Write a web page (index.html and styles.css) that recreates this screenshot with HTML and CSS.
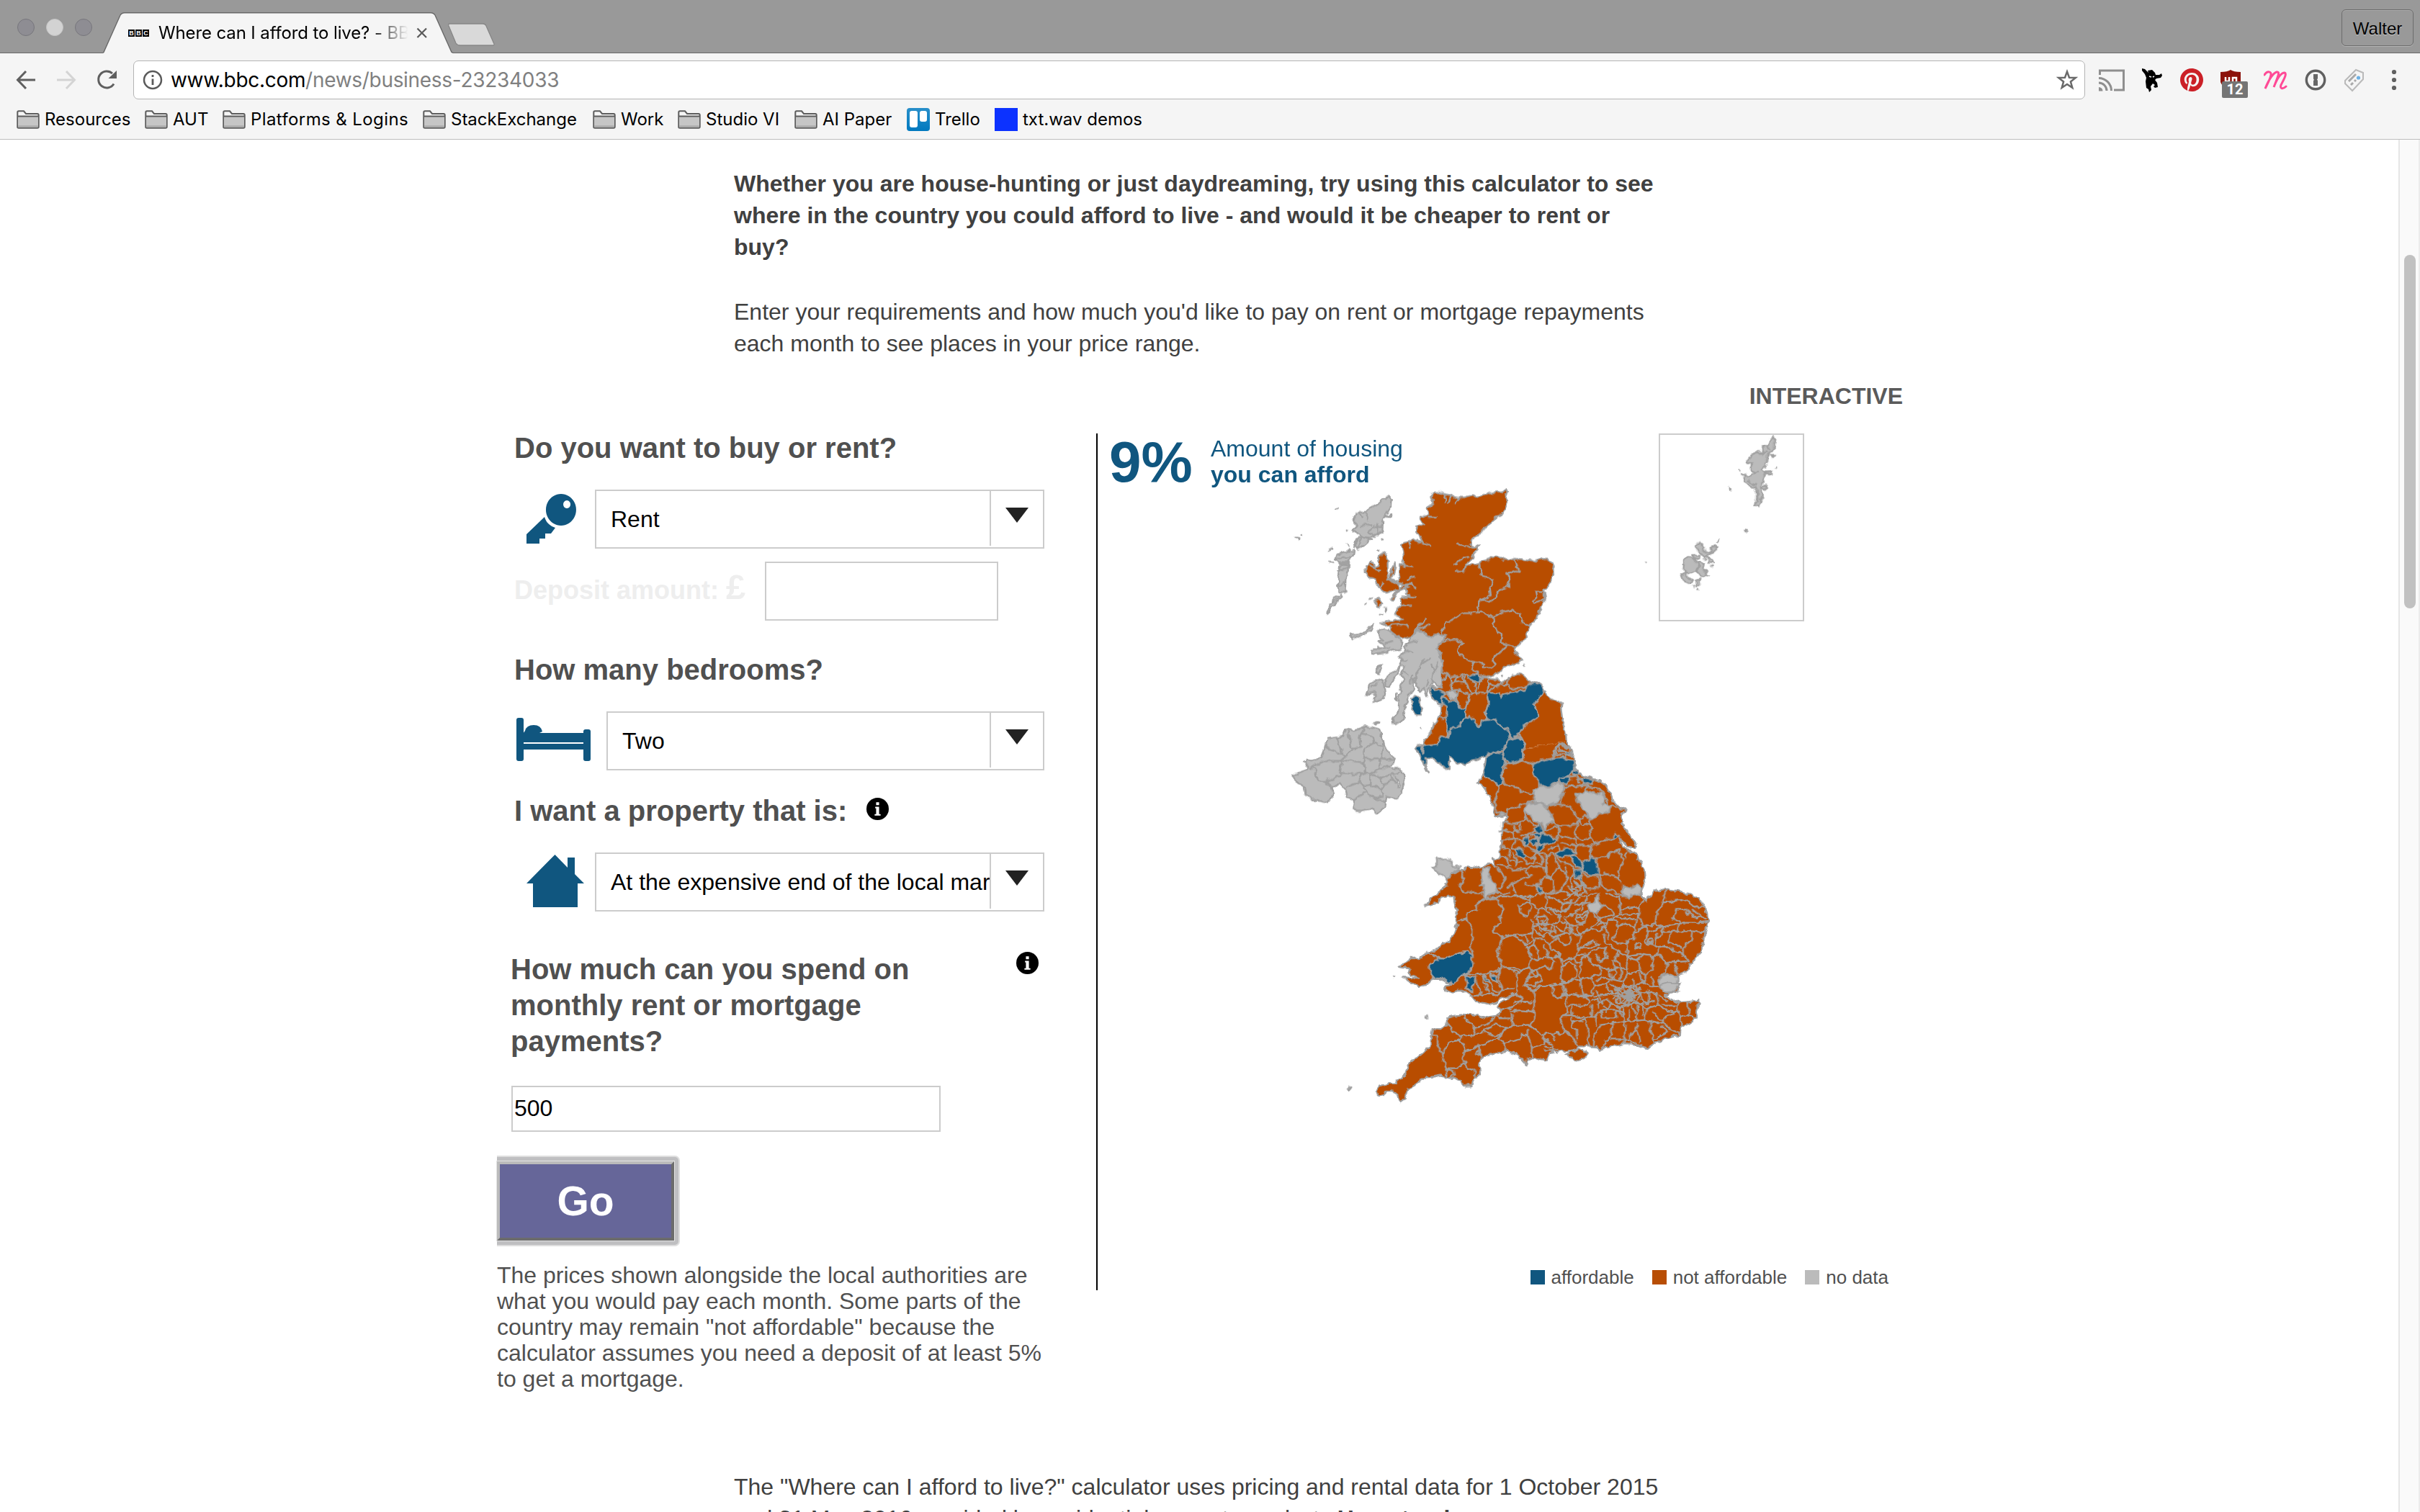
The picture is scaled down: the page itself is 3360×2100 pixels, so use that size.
FILE: index.html
```html
<!DOCTYPE html>
<html lang="en">
<head>
<meta charset="utf-8">
<title>Where can I afford to live? - BBC News</title>
<link rel="stylesheet" href="styles.css">
</head>
<body>
<header class="browser">
  <div class="tabstrip">
    <div class="lights"><i></i><i class="mid"></i><i></i></div>
    <div class="tab">
      <svg class="tab-shape" width="486" height="57" viewBox="0 0 486 57"><path d="M0 57 L1 55.5 L24 4 Q26 .7 30 .7 H455 Q459 .7 461 4 L484 55.5 L486 57Z" fill="#f5f5f5"/><path d="M0 56.2 L1 55.5 L24 4 Q26 .7 30 .7 H455 Q459 .7 461 4 L484 55.5 L486 56.2" fill="none" stroke="#686868" stroke-width="1.4"/></svg>
      <span class="favicon"><b>B</b><b>B</b><b>C</b></span>
      <span class="tab-title">Where can I afford to live? - BB</span>
      <svg class="close" width="16" height="16" viewBox="0 0 16 16"><path d="M1.5 1.5 14 14M14 1.5 1.5 14" stroke="#5a5a5a" stroke-width="2.2"/></svg>
    </div>
    <svg class="newtab" width="68" height="32" viewBox="0 0 68 32"><path d="M3 1H49Q53 1 54 4L65 29Q66 31 62 31H18Q14 31 12 28L2 4Q1 1 3 1Z" fill="#d9d9d9" stroke="#868686" stroke-width="1.3"/></svg>
    <span class="profile">Walter</span>
  </div>
  <div class="toolbar">
    <svg class="nav" width="145" height="32" viewBox="0 0 145 32" fill="none" stroke-width="3">
      <path d="M27 16H3M14 4 2.500 16 14 28" stroke="#5f5f5f"/>
      <path d="M57 16H81M70 4 81.500 16 70 28" stroke="#d4d4d4"/>
      <path d="M136 21.500A11.500 11.500 0 1 1 134 7" stroke="#5f5f5f"/>
      <path d="M140 3V14H128.500Z" fill="#5f5f5f"/>
    </svg>
    <div class="omnibox">
      <svg width="28" height="28" viewBox="0 0 28 28"><circle cx="14" cy="14" r="12" fill="none" stroke="#5a5a5a" stroke-width="2.500"/><path d="M14 12.500V21M14 7V10" stroke="#5a5a5a" stroke-width="2.800"/></svg>
      <span class="url">www.bbc.com<em>/news/business-23234033</em></span>
      <svg class="star" width="30" height="30" viewBox="0 0 30 30"><path d="M15 3.500 18 11.700 26.800 12 19.900 17.400 22.300 25.800 15 21 7.700 25.800 10.100 17.400 3.200 12 12 11.700Z" fill="none" stroke="#6a6a6a" stroke-width="2.500"/></svg>
    </div>
    <div class="extensions">
      <svg width="36" height="31" viewBox="0 0 36 31" fill="none" stroke="#8f8f8f" stroke-width="3"><path d="M1.500 8V2H34.500V29H21M0 12.500A17.500 17.500 0 0 1 17.500 30M0 19A11 11 0 0 1 11 30"/><path d="M0 25A5.500 5.500 0 0 1 5.500 30.500H0Z" fill="#8f8f8f" stroke="none"/></svg>
      <svg width="29" height="33" viewBox="0 0 29 33"><path d="M0 0 4 1 9 6 8 3 14 2 18 6 19 9 24 9 27 7 28 10 26 13 20 14 18 16 21 20 22 26 18 27 16 25 18 23 15 21 12 25 13 30 10 33 9 29 6 27 5 18 6 13 4 8 0 3Z"/><path d="M10 11 13 12M15 12 17 11" stroke="#f5f5f5" stroke-width="1.500"/></svg>
      <svg width="32" height="32" viewBox="0 0 24 24"><path fill="#cb2027" d="M12 0C5.373 0 0 5.372 0 12c0 5.084 3.163 9.426 7.627 11.174-.105-.949-.2-2.405.042-3.441.218-.937 1.407-5.965 1.407-5.965s-.359-.719-.359-1.782c0-1.668.967-2.914 2.171-2.914 1.023 0 1.518.769 1.518 1.690 0 1.029-.655 2.568-.994 3.995-.283 1.194.599 2.169 1.777 2.169 2.133 0 3.772-2.249 3.772-5.495 0-2.873-2.064-4.882-5.012-4.882-3.414 0-5.418 2.561-5.418 5.207 0 1.031.397 2.138.893 2.738.098.119.112.224.083.345l-.333 1.360c-.053.220-.174.267-.402.161-1.499-.698-2.436-2.889-2.436-4.649 0-3.785 2.750-7.262 7.929-7.262 4.163 0 7.398 2.967 7.398 6.931 0 4.136-2.607 7.464-6.227 7.464-1.216 0-2.359-.631-2.750-1.378l-.748 2.853c-.271 1.043-1.002 2.350-1.492 3.146C9.570 23.812 10.763 24 12 24c6.627 0 12-5.373 12-12 0-6.628-5.373-12-12-12z"/></svg>
      <span class="shield"><svg width="28" height="28" viewBox="0 0 28 28"><path d="M0 3Q10 3 14 0 18 3 28 3V17Q26 24 14 28 2 24 0 17Z" fill="#8c120b"/><path d="M7 10V16H12V10M17 18V11H22V16" fill="none" stroke="#fff" stroke-width="2.500"/></svg><b>12</b></span>
      <svg width="33" height="27" viewBox="0 0 33 27"><path d="M1 6C5 0 11 1 10 6 9 12 5 19 2 25 7 13 12 4 18 2 23 1 20 8 14 23 19 10 24 3 29 3 33 4 27 14 24 20 22 26 27 26 31 22" fill="none" stroke="#ff4a96" stroke-width="3" stroke-linecap="round"/></svg>
      <svg width="30" height="30" viewBox="0 0 30 30"><circle cx="15" cy="15" r="12.700" fill="none" stroke="#606060" stroke-width="3.400"/><path d="M12 7H18V13L17 14.500 18 16V23H12V16L13 15 12 13.500Z" fill="#666"/></svg>
      <svg width="29" height="33" viewBox="0 0 29 33"><path d="M17 2 27 6 27 15 12 31 2 21V17Z" fill="#f5f5f5" stroke="#b9b9b9" stroke-width="2"/><path d="M7 18 17 8M10 23 13 20M15 18 17 16" stroke="#a9a9a9" stroke-width="3"/><circle cx="20.500" cy="13" r="2.600" fill="#6db1e4"/></svg>
      <svg class="dots" width="8" height="30" viewBox="0 0 8 30" fill="#606060"><circle cx="4" cy="4" r="3.100"/><circle cx="4" cy="15" r="3.100"/><circle cx="4" cy="26" r="3.100"/></svg>
    </div>
  </div>
  <svg width="0" height="0" class="defs"><symbol id="folder" viewBox="0 0 32 26"><path d="M1.300 24V3Q1.300 1.300 3 1.300H10L13 5H29Q30.700 5 30.700 7V23Q30.700 24.700 29 24.700H3Q1.300 24.700 1.300 24Z" fill="#f5f5f5" stroke="#5c5c5c" stroke-width="2"/><path d="M2.300 9H29.700V23.500H2.300Z" fill="#c6c6c6"/><path d="M2 8.500H30" stroke="#5c5c5c" stroke-width="2"/><path d="M2.300 22.500H29.700" stroke="#a5a5a5" stroke-width="2"/></symbol></svg>
  <nav class="bookmarks">
    <span><svg><use href="#folder"/></svg>Resources</span>
    <span><svg><use href="#folder"/></svg>AUT</span>
    <span class="wide"><svg><use href="#folder"/></svg>Platforms &amp; Logins</span>
    <span><svg><use href="#folder"/></svg>StackExchange</span>
    <span><svg><use href="#folder"/></svg>Work</span>
    <span><svg><use href="#folder"/></svg>Studio VI</span>
    <span><svg><use href="#folder"/></svg>AI Paper</span>
    <span><i class="trello"><b></b><b></b></i>Trello</span>
    <span><i class="blue"></i>txt.wav demos</span>
  </nav>
</header>
<div class="viewport">
<main>
  <section class="prose intro">
    <p><strong>Whether you are house-hunting or just daydreaming, try using this calculator to see<br>where in the country you could afford to live - and would it be cheaper to rent or<br>buy?</strong></p>
    <p>Enter your requirements and how much you'd like to pay on rent or mortgage repayments<br>each month to see places in your price range.</p>
  </section>
  <div class="kicker">INTERACTIVE</div>
  <section class="calculator">
    <form class="controls">
      <h2>Do you want to buy or rent?</h2>
      <div class="row">
        <svg class="key" width="72" height="70" viewBox="0 0 72 70" fill="#10567f"><path d="M48 0A21 22 0 1 1 47.900 0ZM56 9A5 5.500 0 1 0 56.100 9Z" fill-rule="evenodd"/><path d="M25 32Q28 43 40 47L34 55H26V62H18V69H0V56Z"/></svg>
        <div class="select"><span>Rent</span><i></i></div>
      </div>
      <div class="row deposit"><label>Deposit amount: <b>£</b></label><div class="box"></div></div>
      <h2 class="bedrooms">How many bedrooms?</h2>
      <div class="row">
        <svg class="bed" width="103" height="60" viewBox="0 0 103 60" fill="#10567f"><rect width="10" height="60" rx="3"/><rect x="93" y="16" width="10" height="44" rx="3"/><path d="M12 18Q14 10 24 10 34 10 36 19L32 21H93V34H9V22Z"/><path d="M9 36H93V44H9Z"/></svg>
        <div class="select"><span>Two</span><i></i></div>
      </div>
      <h2 class="property">I want a property that is: <svg class="info" viewBox="0 0 30 30"><circle cx="15" cy="15" r="15"/><path d="M12 12H17V22H19V24H11V22H13V14H11.500ZM13 6H17V10H13Z" fill="#fff"/></svg></h2>
      <div class="row">
        <svg class="house" width="80" height="73" viewBox="0 0 80 73" fill="#10567f"><path d="M39.500 0 57 18V4H67V27L80 40H71V73H9V40H0Z"/></svg>
        <div class="select"><span>At the expensive end of the local market</span><i></i></div>
      </div>
      <div class="spend"><h2>How much can you spend on<br>monthly rent or mortgage<br>payments?</h2><svg class="info" viewBox="0 0 30 30"><circle cx="15" cy="15" r="15"/><path d="M12 12H17V22H19V24H11V22H13V14H11.500ZM13 6H17V10H13Z" fill="#fff"/></svg></div>
      <div class="amount">500</div>
      <div class="go"><span>Go</span></div>
      <p class="note">The prices shown alongside the local authorities are<br>what you would pay each month. Some parts of the<br>country may remain "not affordable" because the<br>calculator assumes you need a deposit of at least 5%<br>to get a mortgage.</p>
    </form>
    <div class="results">
      <svg class="map" width="1120" height="1190" viewBox="1524 602 1120 1190">
        <defs>
          <filter id="rough" filterUnits="userSpaceOnUse" x="1524" y="602" width="1120" height="1190"><feTurbulence type="fractalNoise" baseFrequency=".11" numOctaves="2" seed="4"/><feDisplacementMap in="SourceGraphic" scale="8" xChannelSelector="R" yChannelSelector="G"/></filter>
        </defs>
        <path d="M2304 603H2504V862H2304Z" fill="none" stroke="#ccc" stroke-width="2"/>
        <g class="regions" filter="url(#rough)">
          <path class="no" stroke="none" d="M2075 1045H2178V1055H2170L2078 1062Z"/>
          <g transform="translate(1900 1130) scale(.33333)">
            <path class="no" d="M825 -300 828 -292 840 -270 848 -250 855 -220 862 -190 880 -170 900 -155 940 -145 965 -134 990 -115 1005 -90 1020 -50 1040 -28 1072 -12 1055 0 1050 15 1060 45 1080 80 1100 105 1115 130 1110 142 1085 138 1060 120 1045 105 1050 125 1075 145 1100 162 1120 175 1135 205 1152 240 1155 285 1140 310 1135 330 1140 350 1160 362 1185 330 1190 320 1240 315 1290 322 1340 335 1380 365 1405 390 1412 430 1415 460 1400 500 1392 545 1385 575 1360 605 1338 625 1335 650 1305 668 1285 672 1285 710 1300 705 1290 740 1265 748 1235 755 1255 770 1290 787 1330 784 1375 780 1370 800 1368 850 1330 875 1300 885 1295 920 1270 925 1240 935 1200 955 1170 975 1158 982 1140 970 1100 962 1060 960 1020 968 990 972 968 987 950 972 920 970 880 970 850 985 815 992 790 995 775 992 755 1000 750 1025 735 1030 700 1022 660 1018 658 1050 650 1030 625 1008 590 995 565 990 530 1000 500 1005 470 1020 462 1050 465 1085 440 1105 430 1135 400 1135 385 1115 350 1102 325 1100 300 1090 260 1098 220 1100 210 1122 180 1140 160 1150 155 1185 130 1203 120 1175 100 1155 75 1155 65 1170 40 1175 35 1160 45 1135 80 1125 110 1120 140 1100 160 1070 170 1035 200 1020 230 995 262 960 265 925 270 898 300 900 325 880 328 848 360 842 410 835 450 840 490 852 540 845 550 820 535 800 575 775 612 750 590 757 545 770 525 790 490 795 450 785 425 755 395 735 370 735 345 742 315 735 325 715 350 710 325 700 300 690 265 685 250 710 205 720 180 705 140 682 210 685 175 670 170 645 130 640 180 600 215 600 245 580 290 560 330 535 355 505 370 460 362 430 370 400 358 370 355 345 330 345 295 355 290 372 245 378 255 355 300 320 325 300 325 275 350 255 380 232 400 240 410 220 440 225 480 215 510 212 530 222 518 185 550 185 545 160 555 130 555 80 555 40 575 20 578 8 530 12 520 -30 500 -80 470 -120 460 -130 475 -160 485 -200 510 -240 525 -255"/>
          </g>
          <g transform="translate(1780 660) scale(.33333)">
            <path class="no" d="M885 1155 860 1160 830 1180 790 1188 760 1205 730 1195 700 1175 695 1228 660 1205 625 1175 600 1180 598 1205 610 1238 595 1210 575 1175 560 1135 585 1125 600 1095 625 1065 635 1030 660 1005 665 965 640 945 618 915 625 880 645 885 660 885 668 860 665 830 668 800 660 745 640 720 665 690 685 665 660 665 605 670 590 650 570 645 540 670 505 685 480 670 455 650 450 630 415 615 460 605 500 600 470 580 480 555 500 540 490 515 530 510 520 495 515 470 490 480 460 520 455 510 480 480 505 460 485 445 490 370 515 380 500 360 510 330 500 290 530 270 560 275 590 280 575 255 560 235 565 215 590 205 575 170 610 165 605 130 632 115 620 90 640 68 658 70 683 80 700 82 722 92 760 92 790 82 812 90 860 74 895 70 920 72 930 56 942 68 932 92 938 120 925 150 912 165 885 180 860 208 835 232 805 258 788 270 788 288 800 300 822 295 800 330 780 355 752 400 770 380 790 372 815 374 830 360 862 350 890 338 920 348 945 355 970 348 1000 350 1040 355 1080 352 1105 350 1122 362 1132 385 1134 410 1122 435 1105 460 1092 485 1098 515 1085 535 1072 560 1062 595 1045 615 1028 628 1025 655 1015 675 1000 695 980 712 968 722 968 740 990 752 1003 765 985 782 965 790 945 788 925 800 905 820 885 835 860 838 830 832 850 845 880 850 920 858 945 850 960 832 985 828 1010 840 1035 862 1060 868 1078 872 1090 895 1115 930 1140 940 1160 955 1165 990 1170 1030 1180 1070 1185 1110"/>
            <g class="no"><path d="M340 400 365 375 375 355 385 385 400 375 410 330 425 325 440 350 440 420 455 440 480 455 490 480 460 480 430 490 400 465 385 430 360 425ZM385 530 405 515 418 535 405 550ZM425 555 435 555 432 570ZM460 390 470 365 472 385 458 435 450 425Z"/></g>
            <path class="line" d="M683 80 676 112M700 85 690 115M738 92 720 118M610 175 645 178M560 275 600 285 617 298M530 270 532 300M735 290 760 298 800 300M775 340 745 350 720 372M720 402 752 402M500 375 542 380M520 435 550 422M505 460 540 455 556 472M515 470 540 450M500 505 555 508M500 540 535 542M460 605 505 600M450 625 490 622 525 632M540 670 570 630 598 595M570 640 590 628 618 628M400 470 420 450M370 380 410 400M440 430 530 470M470 500 490 480"/>
            <path class="line" d="M825 362 830 420 860 425 880 440 865 465 870 500 820 525 815 565M970 350 975 380 995 400 970 398 940 410 945 465 910 475 880 520 820 525M1092 490 1055 488 1060 510 1042 520 1055 530 1095 515M665 665 680 615 720 595 750 575 790 575 830 570 880 590 920 570 960 560 990 575 1000 610 1028 628M880 590 885 630 915 665 910 700 940 710 980 712M665 690 720 685 755 700 735 705 735 745 800 780 840 785 835 800 880 800 890 790 875 768 905 740 935 715M800 780 790 805 815 828M670 820 690 825 700 840 740 835 770 832M690 825 680 850 665 855M700 840 705 870 735 860 760 865 750 840M735 835 720 860M760 840 765 870 790 905 810 910 805 885 795 862M705 870 710 895 740 895 780 915 810 905 860 905 862 850M740 895 725 930 740 970M835 842 815 885M865 870 900 880 920 860M862 905 900 870 935 875 945 890 1035 880M930 870 950 850M780 915 765 970M660 1010 680 1010M890 1150 930 1140 985 1095M985 1070 990 1095M1125 1170 1140 1130 1165 1120 1190 1130M1150 1150 1195 1150"/>
            <g class="yes"><path d="M862 905 885 908 905 905 912 928 930 910 975 900 1010 895 1030 872 1060 868 1080 875 1090 895 1075 925 1048 955 1060 980 1068 1005 1045 1020 1010 1045 990 1070 965 1100 950 1085 945 1065 915 1045 890 1020 850 1018 848 985 860 950 855 925Z"/><path d="M585 1125 650 1120 655 1095 690 1090 710 1050 745 1045 750 1010 780 1003 800 1020 822 1050 835 1022 870 1018 890 1025 915 1045 945 1065 955 1105 925 1130 910 1150 885 1155 860 1160 830 1180 790 1188 760 1205 730 1195 700 1175 695 1228 660 1205 625 1175 600 1180 598 1205 610 1238 595 1210 575 1175 560 1135Z"/><path d="M672 925 700 940 730 945 740 970 765 970 760 1005 745 1045 710 1050 690 1085 688 1040 680 1010 690 985 690 965 660 945Z"/><path d="M625 878 645 895 680 910 665 930 668 960 640 942 618 915Z"/><path d="M540 930 560 920 575 935 578 965 585 975 578 998 560 998 545 980 538 950Z"/><path d="M770 832 815 828 835 842 815 868 800 862Z"/><path d="M915 1150 945 1105 985 1095 1010 1118 1000 1140 1000 1185 945 1200 925 1180Z"/><path d="M885 1155 915 1160 930 1185 920 1220 920 1290 900 1295 870 1268 835 1250 845 1210 850 1175Z"/></g>
            <g class="none"><path d="M582 1130 590 1152 584 1155Z" fill="#fff"/><path d="M685 905 715 897 730 915 722 938 700 925Z"/><path d="M540 670 570 650 595 650 605 670 680 665 665 695 640 720 660 745 668 800 665 830 670 855 660 882 640 870 625 855 615 885 600 918 590 885 575 900 560 865 545 850 545 870 550 890 525 915 520 950 510 985 505 1020 490 1035 465 1035 465 1010 480 990 485 940 495 905 490 890 505 850 495 830 510 800 490 790 500 765 485 760 510 730 510 715 530 695Z"/><path d="M400 650 430 640 450 650 475 670 505 700 495 725 460 730 440 740 400 745 375 740 375 725 410 725 430 710 400 690 420 685 400 670Z"/><path d="M350 915 365 870 380 860 420 850 425 880 430 920 415 935 380 945 395 920 385 905 360 910Z"/><path d="M430 850 490 795 485 820 445 885 430 880ZM285 665 310 665 345 650 380 620 370 645 330 670 300 680 290 685ZM400 800 418 790 405 825 395 820ZM475 915 482 912 478 940 473 935Z"/><path d="M300 180 310 160 345 150 370 135 405 115 445 88 455 100 453 130 435 165 420 190 418 235 400 250 365 260 340 258 315 245 295 225 310 210 300 195ZM310 265 335 258 370 270 345 290 320 305 300 290ZM230 330 260 322 300 310 295 340 275 360 275 400 265 440 262 490 235 485 235 430 245 370 225 345ZM215 510 245 495 250 510 220 535 200 560 190 578 185 570 205 535ZM432 175 456 163 450 178ZM360 512 380 514M380 1032 400 1032 392 1040ZM58 260 70 262 66 268ZM222 138 234 140M80 246 84 248M198 360 215 362M198 312 205 308M272 230 274 232M400 310 403 312M415 266 420 268M346 536 349 536M410 578 416 580M575 1055 577 1057M1008 792 1010 794M912 835 914 837M1160 960 1165 953M272 290 278 296M275 315 285 305"/>
            <path d="M540 830 535 870M590 770 560 830 550 860M620 760 580 790M650 780 630 820 625 850M625 790 630 815M530 700 560 690M510 735 540 740M495 770 520 770M500 820 520 830M600 880 610 850M430 700 460 690M360 190 350 155M335 175 325 155M330 210 370 205M385 210 360 235 375 250M400 205 400 245M415 210 385 215M240 365 280 365M235 400 270 385M240 455 262 450M235 345 290 345M330 265 320 300M400 720 450 722M375 880 395 870M250 370 280 375M300 300 320 260M210 530 235 510"/>
            <path d="M40 1252 100 1228 110 1215 90 1195 100 1185 120 1192 160 1180 180 1130 190 1095 225 1090 255 1090 265 1055 300 1062 340 1048 375 1050 410 1060 420 1090 430 1130 450 1160 470 1180 465 1200 440 1210 460 1222 490 1222 505 1250 510 1285 495 1325 475 1348 435 1340 430 1380 400 1408 370 1390 330 1398 295 1395 300 1355 270 1340 262 1310 240 1285 205 1305 213 1330 190 1365 140 1355 95 1330 90 1300 60 1275Z"/><path d="M180 1130 220 1145 240 1165 265 1170 245 1190 170 1190 120 1220 140 1225 150 1275 185 1275 240 1250 250 1190 340 1200 345 1240 300 1245 240 1240M185 1275 205 1305M230 1095 240 1130 250 1165M275 1065 290 1140 265 1170M290 1140 330 1135 325 1100 340 1050M330 1075 380 1090 385 1115 345 1135 340 1200M385 1115 415 1130M340 1180 405 1180 470 1185M405 1180 410 1225 370 1245 345 1240M370 1245 370 1290 340 1295 320 1270 330 1245M410 1225 440 1215M370 1245 410 1260 425 1290 415 1310 370 1290M410 1260 450 1250M425 1290 465 1270 450 1250 490 1240M340 1295 350 1320 300 1355M350 1320 380 1345 420 1340 415 1310M270 1300 320 1280M380 1345 430 1360M410 1080 425 1110 415 1180M465 1270 475 1280" fill="none"/><path d="M472 1255 492 1275 490 1300 482 1300 482 1275Z" fill="#fff"/></g>
          </g>
          <g transform="translate(1900 900) scale(.33333)">
            <path class="line" d="M570 480 600 480 640 468 685 485 690 530 710 555 710 590 685 605 640 600 600 575 570 570 560 545 555 520 570 500ZM595 380 630 365 640 390 655 405 640 440 645 465M540 575 540 600 528 625 525 660 545 690M685 640 640 650 610 665 580 668 578 700M560 725 600 735 640 725 655 700 645 675M765 462 775 440 790 400 820 410 842 415M790 400 800 425 825 430M775 440 820 445 850 445M820 450 830 475 850 478M850 470 860 530M840 540 870 535 885 545M840 570 870 575 895 565M905 595 915 575 980 600 1000 660 1070 672M815 580 860 575 915 572M745 660 790 650 840 660 860 690 875 715 870 735 830 740 790 740 770 730M815 605 800 645M875 715 900 700 925 712 920 740 890 735ZM925 715 925 790 895 800 865 790 860 760 875 740M790 740 795 780 780 800M795 780 860 798 870 822 930 820M925 790 940 822 990 800 1020 795M805 810 865 825 862 855M735 760 775 745 790 752M560 760 600 770 630 760 632 730M555 800 600 795 640 800 648 830M600 770 610 800 600 830 635 838M635 775 665 780 690 762M655 705 690 735 708 740M565 800 560 830 590 840 585 870M660 825 680 840 700 850 690 875 665 870M640 870 660 900 690 895 690 875M700 850 740 860 745 900M600 860 620 880 610 910M570 870 590 905 570 915M715 855 730 880 720 905 700 890M590 880 640 895M750 840 790 820 800 840M740 870 765 855 790 900 780 930 760 955 740 940ZM780 865 800 890 840 900 862 925M930 820 920 870M950 880 990 865 1040 840 1055 860 1060 900 1040 930 1050 980M955 940 1000 945 1045 960M970 945 970 990 1000 1005 1060 1035M1000 870 1010 850 1050 840M1075 845 1070 870M890 940 910 950 960 950 965 1000 910 1005 890 975M862 940 840 960 850 1000M820 910 830 960 800 1010M790 910 820 940M985 935 1000 940M540 905 600 925 660 920 680 910 735 915 740 940M550 930 575 960 545 1000M515 905 550 930M600 980 650 960 675 950 660 925M575 1000 600 980 610 1025M650 980 700 995 735 950 775 965 775 1010 740 1025M385 935 400 960 380 985 400 1015 475 1020M350 940 390 930M540 1020 560 1025 590 1015M485 1045 530 1040M860 970 880 1000 870 1030M890 980 905 1020M545 765 575 755M610 740 620 765M555 870 580 880"/>
            <g class="yes"><path d="M685 485 715 470 760 462 800 455 850 470 860 495 835 535 795 540 790 560 750 578 715 575 710 555 690 530ZM795 540 835 540 830 567 800 565ZM850 515 865 503 880 525 855 530ZM885 540 938 550 935 567 895 565ZM820 430 846 432 840 440 825 440ZM868 545 878 545 875 560ZM688 755 710 736 730 768 700 772ZM645 792 667 783 672 815 655 830ZM713 773 745 776 784 802 750 820 713 812ZM678 780 712 771 714 790 690 792ZM673 802 705 793 712 812 685 822ZM698 823 737 816 727 837 710 852 700 842ZM616 836 640 843 662 868 640 875 618 862ZM776 858 820 838 852 840 864 855 825 867 795 868ZM838 863 860 866 890 890 882 920 862 908ZM892 895 920 885 925 870 952 876 954 910 960 942 930 944 888 930ZM860 923 884 923 880 962 865 952ZM873 960 890 953 890 977ZM701 986 715 1000 724 1022 705 1017ZM1012 797 1030 768 1044 787Z"/></g>
            <g class="none"><path d="M690 595 715 582 750 578 790 562 815 575 810 605 790 640 745 660 720 648 685 640ZM645 675 660 652 710 645 740 660 760 690 770 725 745 735 735 760 720 738 690 715 660 690ZM865 610 890 610 905 595 945 605 975 605 985 630 980 650 1012 660 1000 685 960 690 935 715 915 708 905 675 880 655 870 630ZM265 912 285 910 285 880 325 878 345 892 350 912 385 912 350 940 328 965 300 945ZM478 912 500 920 500 950 530 985 540 1020 500 1030 485 1045 475 1030 485 990 465 990 478 965 472 935ZM1058 990 1090 1000 1120 985 1135 1005 1130 1025 1100 1028 1085 1045 1060 1030ZM955 1025 960 1055 975 1070 965 1090 945 1105 915 1095 912 1070 940 1060ZM542 688 572 690 560 700 542 700ZM280 878 284 880M240 1070 242 1074"/></g>
          </g>
          <g transform="translate(1900 1130) scale(.33333)">
            <path class="no" d="M820 1005 845 990 880 980 912 1000 890 1025 872 1032 850 1015Z"/>
            <path class="line" d="M535 345 505 350 485 355 455 375 455 400 410 412 412 440 430 475 430 520 425 560 435 590M372 450 408 440M250 575 270 590 290 602M535 345 540 375 560 400 545 430 555 455 520 485 545 505 560 515 545 545 540 590 555 640 530 660 500 665 450 670 415 668M560 515 590 505 625 520 665 550 675 600 665 640 640 655 600 640 555 640M545 645 545 700 560 735M580 645 618 660 615 745M450 680 455 720 470 735 460 760M480 670 475 700 500 740M505 705 520 740 545 740M540 660 530 700 548 722M440 760 500 750 540 755 560 735 600 730M250 640 290 612M385 680 350 710M590 505 680 500 690 460 680 440M620 385 665 370 675 395 662 432 640 415ZM580 345 640 345 670 362M535 345 580 345"/>
            <path class="line" d="M265 925 285 925 285 960 305 995 310 1030 325 1065 325 1095M330 880 350 905 385 930 380 945 340 955 320 980 310 1000M380 945 400 960 400 990 395 1020 410 1040 370 1060 325 1062M400 990 440 980 460 965M400 1040 410 1060 440 1070 445 1100M460 965 470 1020M455 990 466 985 462 1002 450 998ZM380 930 440 925 480 905M440 925 445 895 400 855 400 840M440 895 490 880 540 845M480 905 500 890 530 880 575 892 555 920 520 925 480 905M465 965 540 935 570 960 565 990M540 935 570 892 600 885 670 880 690 900M595 830 600 885M545 850 590 850M590 820 640 820 690 825M610 790 630 780 680 785M550 820 620 800 640 770 610 750M570 955 630 940 640 920 665 925M325 1065 350 1070 355 1090 340 1102M690 740 690 860 675 885 725 920 800 915 815 910 800 850 830 830 825 790 820 750 800 765 770 760 765 715 720 720 690 740M665 900 665 925 680 975 680 1015M725 920 730 960 680 975M725 940 770 960 770 990 735 985M760 920 775 940M735 970 790 985"/>
            <path class="line" d="M820 910 850 930 870 965M845 850 845 890 870 900 870 940M850 800 845 840 815 840M820 750 900 760 920 775 915 800 835 800M845 842 925 850 930 800M905 855 915 900 910 945 920 968M935 965 940 920 970 880 1020 875M945 845 945 885M845 870 905 855M1020 880 1010 930 985 945 975 980M1010 940 1070 940 1140 965M1070 870 1065 960M970 880 1065 868 1150 860 1200 870 1225 870M1115 880 1130 950M1080 940 1090 920 1115 900M1170 870 1180 920 1190 955M1190 940 1250 910 1220 885M1225 870 1260 900 1295 915M1150 860 1160 810 1210 800 1240 820 1290 830 1290 785M1210 800 1200 755M1290 830 1300 850 1300 885M1300 850 1330 840 1365 855M1330 785 1335 840M1225 870 1235 850 1290 825M1185 830 1225 860M1120 800 1120 860M970 820 1030 820 1065 830 1065 865M970 820 975 850 1030 850 1030 820M1040 800 1050 840M1085 820 1085 860M1140 790 1145 840M930 850 975 820M1210 755 1245 780M1230 800 1290 800"/>
            <path class="line" d="M885 690 930 680 940 720 930 760 895 755 885 720ZM810 705 880 690M810 705 820 745M805 635 840 620 865 635 865 680 825 705 800 690ZM775 600 800 590 810 635M690 735 700 720 760 715 810 705M618 665 670 640 680 660 660 690 650 715 690 740M660 690 710 670 725 690 690 715 650 715M680 655 700 650 708 665 690 672ZM705 650 730 630 760 650 770 620M675 600 710 610 740 600 775 600M665 555 680 590M710 610 705 570 690 550 700 520M730 550 745 590 775 615M700 520 730 520 750 545M755 545 760 570 800 590 815 615 860 600 870 570 885 555M755 545 780 520M885 555 940 530 955 545 930 560ZM880 510 920 480 960 490 985 470M860 470 885 510 870 570M780 510 820 550 845 530 840 510M820 480 845 480 840 500 815 500ZM870 590 910 590 960 560 985 560M910 590 930 625 970 640 960 670M885 620 880 690M860 600 870 625 910 590M980 500 985 540 1010 550 1040 575M1020 520 1045 470 1070 455 1110 480 1105 520 1070 540 1040 545ZM985 470 1000 440 1035 450 1045 475M950 590 960 620 1000 600 985 570M1040 575 1030 610 1060 640M985 560 985 600M1075 530 1080 600M1080 600 1120 610 1135 660 1080 670 1075 640ZM1115 540 1135 545 1130 565 1115 560ZM1110 500 1150 465 1165 500 1150 530 1190 555M1165 495 1225 475 1225 500 1200 520M1165 520 1180 520 1178 540 1165 530ZM1040 575 1080 595 1150 585 1180 590 1185 650 1150 670 1130 660M1120 605 1150 585M1180 590 1215 590 1245 625 1240 655 1210 680M1190 555 1230 550 1300 580 1335 610M1215 560 1200 585M1215 590 1250 620 1335 615M1275 625 1285 665M1190 555 1200 500"/>
            <path class="line" d="M1195 460 1200 410 1225 380 1230 345 1240 320M1230 370 1300 360 1340 370 1370 395 1395 380M1280 400 1330 400 1360 430 1400 435M1280 400 1270 435 1295 450 1290 490M1320 410 1335 410 1335 422 1318 418ZM1130 390 1130 430 1140 460 1195 465 1225 475 1290 460M1045 345 1050 400 1130 390 1145 360M1260 490 1250 540 1300 560M1225 490 1350 490 1400 500M1350 490 1340 530 1310 560 1310 590M1295 455 1370 455 1410 450M1350 400 1400 440M975 380 1010 400 1020 420 960 440 950 410M1010 440 1050 420 1125 420M1020 430 1110 445M960 440 990 480 1000 520M990 450 960 465M860 380 920 370M910 410 905 450 880 460 860 440 870 420ZM820 430 860 420 880 390M815 440 850 470 890 460M930 415 960 450 930 480M1050 420 1045 350 990 330M1110 480 1120 440 1125 420M720 330 760 335 800 320 830 340M680 345 730 330 750 360 740 400 700 395 670 370ZM750 345 810 375 805 410 750 390M830 340 860 330 880 350M700 430 730 425 750 440 740 460 710 455ZM730 460 770 470 780 500M720 470 740 490 780 490M760 400 790 420 800 450 770 460M790 430 800 420 805 435ZM800 450 860 470M690 490 720 510 750 500 770 515 815 500M680 500 690 530 660 540M650 505 660 530M850 300 870 320 860 340M880 280 900 320 880 340M860 330 900 345 945 330M830 300 850 330 820 360M865 290 895 300M810 375 860 370 880 350M740 400 760 420M690 430 710 400M885 420 895 440M870 435 905 425M700 460 740 480M690 475 740 440M740 470 750 440M760 500 760 470M830 450 820 480M650 345 680 345M890 280 910 310M700 440 720 490M720 440 740 470M780 470 810 490M840 470 850 500 880 510M840 320 880 300M850 360 830 400 800 405M905 350 890 400M660 560 690 550"/>
            <path class="line" d="M940 720 990 710 1010 690 1000 650 970 640M1010 690 1060 700 1080 670M1060 640 1050 690M1020 610 1030 660 1010 690M940 760 990 755 1030 745 1050 755M960 790 990 770 1010 790 1040 810 1075 800 1120 790 1160 810M990 710 1000 740 1030 745M1060 700 1070 720 1110 715 1140 700 1130 670M1140 700 1180 720 1210 715M1110 715 1130 750 1160 740 1200 755M1150 670 1160 700 1140 700M930 780 955 770 960 810M1000 690 970 680 950 700M1040 730 1010 710M1130 750 1150 790 1190 780M1030 640 1075 650M1000 655 1040 640M950 740 975 790M1170 740 1165 790M980 800 1000 820M1010 790 990 830M1100 690 1105 720M960 670 930 680M1180 680 1185 720M1095 800 1110 830M1060 810 1060 840"/>
            <path class="line" d="M1040 735 1060 720 1090 722 1120 735 1130 760 1115 785 1085 798 1055 790 1038 765ZM1055 745 1080 735 1105 745 1110 765 1090 780 1065 772ZM1040 735 1110 765M1060 720 1095 782M1090 722 1070 790M1120 735 1055 770M1038 765 1125 755M1065 745 1090 760 1075 770 1100 775 1085 745M1070 755 1105 750M1085 798 1090 720M1055 790 1075 740M1038 750 1110 785M1080 735 1080 780M1025 755 1040 765 1030 785 1055 790M1025 730 1040 735M1020 770 1038 765M1115 785 1140 790M1120 735 1135 725"/>
            <g class="yes"><path d="M285 600 330 602 380 580 410 575 435 595 430 640 415 668 385 680 355 710 325 700 300 685 265 682 250 650 250 630 290 612ZM400 672 425 680 448 680 445 710 430 722 430 745 405 725 410 700ZM478 668 490 678 507 707 490 702ZM506 670 530 678 537 700 518 694Z"/></g>
            <g class="none"><path d="M1215 680 1240 665 1285 685 1285 705 1300 708 1270 745 1225 740 1210 715ZM1215 715 1250 705 1300 708M243 840 247 852M103 679 105 681M-88 1147 -80 1138 -74 1140 -80 1150Z"/></g>
          </g>
          <g class="none" transform="translate(2280 580) scale(.33333)"><path d="M530 90 542 83 556 90 550 125 545 135 525 150 522 185 510 205 500 215 515 240 500 265 497 290 500 330 485 375 468 370 475 330 470 290 450 285 422 265 422 240 445 245 470 235 455 215 455 190 432 190 445 172 460 155 480 145 505 145 505 118 522 118 528 130ZM532 155 555 155 545 165ZM510 225 540 222 540 235 515 232ZM500 290 515 275 522 290 512 302ZM490 335 503 335M415 235 428 240M555 210 562 207M404 223 406 224M365 290 372 295 366 300ZM431 472 437 466 434 478ZM12 597 14 598M445 265 470 280M460 240 480 225M480 300 480 350M508 150 520 140"/><path d="M175 590 195 580 220 595 235 615 225 640 195 652 172 635ZM162 655 180 648 190 665 212 675 205 692 182 692ZM210 573 240 572 238 590 215 588ZM220 532 245 518 245 540 265 560 285 555 295 535 320 545 290 560 275 570 262 588 250 570 228 548ZM272 580 295 590 298 605 275 605ZM235 605 255 605 250 625 270 640 270 655 250 665 230 645 235 625ZM225 675 240 670 240 705 228 708ZM312 520 320 512M235 719 238 722M214 705 217 700M292 618 293 620M270 657 276 660"/></g>
        </g>
      </svg>
      <div class="headline"><strong>9%</strong><span>Amount of housing<br><b>you can afford</b></span></div>
      <div class="legend"><span><i class="c-yes"></i>affordable</span><span><i class="c-no"></i>not affordable</span><span><i class="c-none"></i>no data</span></div>
    </div>
  </section>
  <p class="prose after">The "Where can I afford to live?" calculator uses pricing and rental data for 1 October 2015<br>and 31 May 2016 provided by residential property analysts <strong>Hometrack</strong>.</p>
</main>
<div class="scrollbar"><i></i></div>
</div>
</body>
</html>
```
FILE: styles.css
```css
* { box-sizing: border-box; }
body { margin: 0; height: 2100px; overflow: hidden; background: #fff; font-family: "Liberation Sans", Arial, sans-serif; display: flex; flex-direction: column; }
svg { display: block; flex: none; }
h2, p { margin: 0; }
i, em { font-style: normal; }

/* Browser chrome */
.browser { height: 194px; flex: none; background: #f5f5f5; border-bottom: 1px solid #bdbdbd; font-family: Inter, Roboto, sans-serif; color: #000; }
.tabstrip { height: 74px; background: #999; border-bottom: 1px solid #686868; display: flex; align-items: flex-start; padding: 0 9px 0 24px; }
.lights { display: flex; gap: 16px; padding-top: 26px; width: 119px; }
.lights i { width: 24px; height: 24px; border-radius: 50%; background: #8e8d93; border: 1px solid #77767c; }
.lights .mid { background: #d3d3d3; border-color: #c4c4c4; }
.tab { position: relative; width: 486px; height: 57px; margin-top: 17px; display: flex; align-items: center; padding-left: 35px; }
.tab-shape { position: absolute; left: 0; top: 0; }
.favicon { position: relative; display: flex; gap: 1px; width: 42px; }
.favicon b { width: 9px; height: 10px; background: #000; color: #fff; font: bold 9px/10px "Liberation Sans", sans-serif; text-align: center; }
.tab-title { position: relative; width: 350px; overflow: hidden; white-space: nowrap; font-size: 24px; letter-spacing: -.12px; line-height: 34px; -webkit-mask-image: linear-gradient(90deg, #000 84%, transparent 99%); mask-image: linear-gradient(90deg, #000 84%, transparent 99%); }
.close { position: relative; margin-left: 8px; }
.newtab { margin: 32px 0 0 -8px; }
.profile { margin: 13px 0 0 auto; width: 100px; height: 51px; border: 1px solid #6c6c6c; border-radius: 6px; box-shadow: 0 1px 0 #b5b5b5, inset 0 1px 0 #aaa; text-align: center; font: 24px/51px "Liberation Sans", sans-serif; text-shadow: 0 1px 0 #ccc; }
.toolbar { display: flex; align-items: center; height: 73px; padding: 1px 0 0 22px; }
.nav { margin-right: 18px; }
.omnibox { width: 2710px; height: 54px; border: 1px solid #b4b4b4; border-radius: 7px; background: #fff; display: flex; align-items: center; padding: 0 9px 0 12px; }
.url { margin-left: 11px; font-size: 28px; letter-spacing: -.3px; }
.url em { color: #808080; }
.star { margin-left: auto; }
.extensions { flex: 1; display: flex; align-items: center; padding: 0 32px 0 19px; justify-content: space-between; }
.shield { position: relative; width: 36px; height: 28px; overflow: visible; }
.shield b { position: absolute; left: 2px; top: 16px; width: 36px; height: 23px; border-radius: 2px; background: #757575; color: #fff; font: bold 20px/23px Roboto, sans-serif; text-align: center; }
.dots { margin-left: 13px; }
.defs { position: absolute; }
.bookmarks { display: grid; grid-template-columns: 178px 108px 278px 236px 118px 162px 156px 122px auto; padding-left: 23px; height: 38px; font-size: 24px; line-height: 38px; letter-spacing: 0; }
.bookmarks span { display: flex; align-items: center; gap: 7px; white-space: nowrap; }
.bookmarks .wide { letter-spacing: .4px; }
.bookmarks svg { width: 32px; height: 26px; }
.trello { width: 32px; height: 32px; border-radius: 4px; background: linear-gradient(#298fca, #0079bf); display: flex; gap: 3px; padding: 4px; }
.trello b { width: 11px; height: 23px; border-radius: 3px; background: #fff; }
.trello b + b { height: 15px; }
.blue { width: 32px; height: 32px; background: #0c32ff; }

/* Page */
.viewport { display: flex; height: 1906px; overflow: hidden; }
main { width: 3330px; }
.scrollbar { width: 30px; background: #fafafa; border-left: 2px solid #e6e6e6; border-right: 2px solid #ececec; padding: 160px 0 0 6px; }
.scrollbar i { display: block; width: 16px; height: 491px; border-radius: 8px; background: #c1c1c1; }
.prose { margin-left: 1019px; font-size: 32px; line-height: 44px; color: #404040; white-space: nowrap; }
.intro { padding-top: 39px; height: 335px; }
.intro p + p { margin-top: 46px; }
.kicker { width: 2642px; height: 68px; text-align: right; font-size: 32px; line-height: 43px; font-weight: bold; color: #5a5a5a; }
.calculator { display: flex; align-items: flex-start; margin-left: 690px; height: 1446px; color: #505050; }
.controls { width: 832px; }
h2 { font-size: 40px; line-height: 50px; padding-left: 24px; white-space: nowrap; }
.row { display: flex; align-items: center; height: 82px; margin-top: 33px; width: 760px; }
.key, .house { margin-left: 41px; }
.house { margin-top: -3px; }
.bed { margin: -5px 0 0 27px; }
.select { margin-left: auto; width: 624px; height: 82px; border: 2px solid #ccc; display: flex; color: #000; font-size: 32px; line-height: 78px; }
.bed + .select { width: 608px; }
.select span { flex: 1; padding-left: 20px; overflow: hidden; white-space: nowrap; height: 76px; }
.select i { width: 74px; height: 76px; border-left: 2px solid #ccc; }
.select i::after { content: ""; display: block; margin: 23px 0 0 20px; border: 16px solid transparent; border-top: 21px solid #222; border-bottom: 0; width: 0; }
.deposit { margin-top: 18px; padding-left: 24px; color: #eee; }
.deposit label { width: 348px; font-size: 36px; font-weight: bold; white-space: nowrap; line-height: 79px; height: 82px; }
.deposit label b { font-size: 49px; line-height: 1; }
.box { width: 324px; height: 82px; border: 2px solid #ccc; }
.bedrooms { margin-top: 43px; }
.property { margin-top: 31px; display: flex; }
.info { width: 31px; height: 31px; }
.property .info { margin: 7px 0 0 27px; }
.spend { display: flex; justify-content: space-between; width: 752px; margin-top: 54px; }
.spend h2 { padding-left: 19px; position: relative; top: 1px; }
.spend .info { margin-top: 2px; }
.amount { margin: 38px 0 0 20px; width: 596px; height: 64px; border: 2px solid #ccc; padding-left: 2px; font-size: 32px; line-height: 59px; color: #000; }
.go { width: 254px; height: 126px; margin-top: 33px; background: #bfbfc1; border: 2px solid #dedede; border-left: 0; border-radius: 0 7px 7px 0; padding: 6px 6px 0 0; }
.go span { display: block; width: 246px; height: 110px; border: 4px solid; border-color: #bbb #6c6c6c #6c6c6c #bbb; outline: 1px solid #e4e4e4; background: #669; color: #fff; font-size: 57px; font-weight: bold; line-height: 102px; text-align: center; }
.note { margin-top: 22px; font-size: 32px; line-height: 36px; white-space: nowrap; }
.results { position: relative; width: 1122px; height: 1190px; margin-top: 5px; border-left: 2px solid #000; display: flex; flex-direction: column; justify-content: space-between; }
.map { position: absolute; left: 0; top: 0; }
.headline { position: relative; display: flex; color: #10567f; padding-left: 16px; font-size: 32px; line-height: 36px; }
.headline strong { font-size: 80px; line-height: 80px; width: 141px; }
.headline span { padding-top: 3px; }
.legend { position: relative; display: flex; justify-content: flex-end; gap: 25px; padding-right: 22px; font-size: 26px; line-height: 36px; }
.legend span { display: flex; align-items: center; gap: 9px; }
.legend i { width: 20px; height: 20px; }
.c-yes { background: #10567f; }
.c-no { background: #b84e05; }
.c-none { background: #bbb; }
.regions { stroke: #a0a0a0; stroke-width: 7; stroke-linejoin: round; stroke-linecap: round; }
.yes { fill: #10567f; }
.no { fill: #b84e05; }
.none { fill: #bbb; }
.line { fill: none; }
```
